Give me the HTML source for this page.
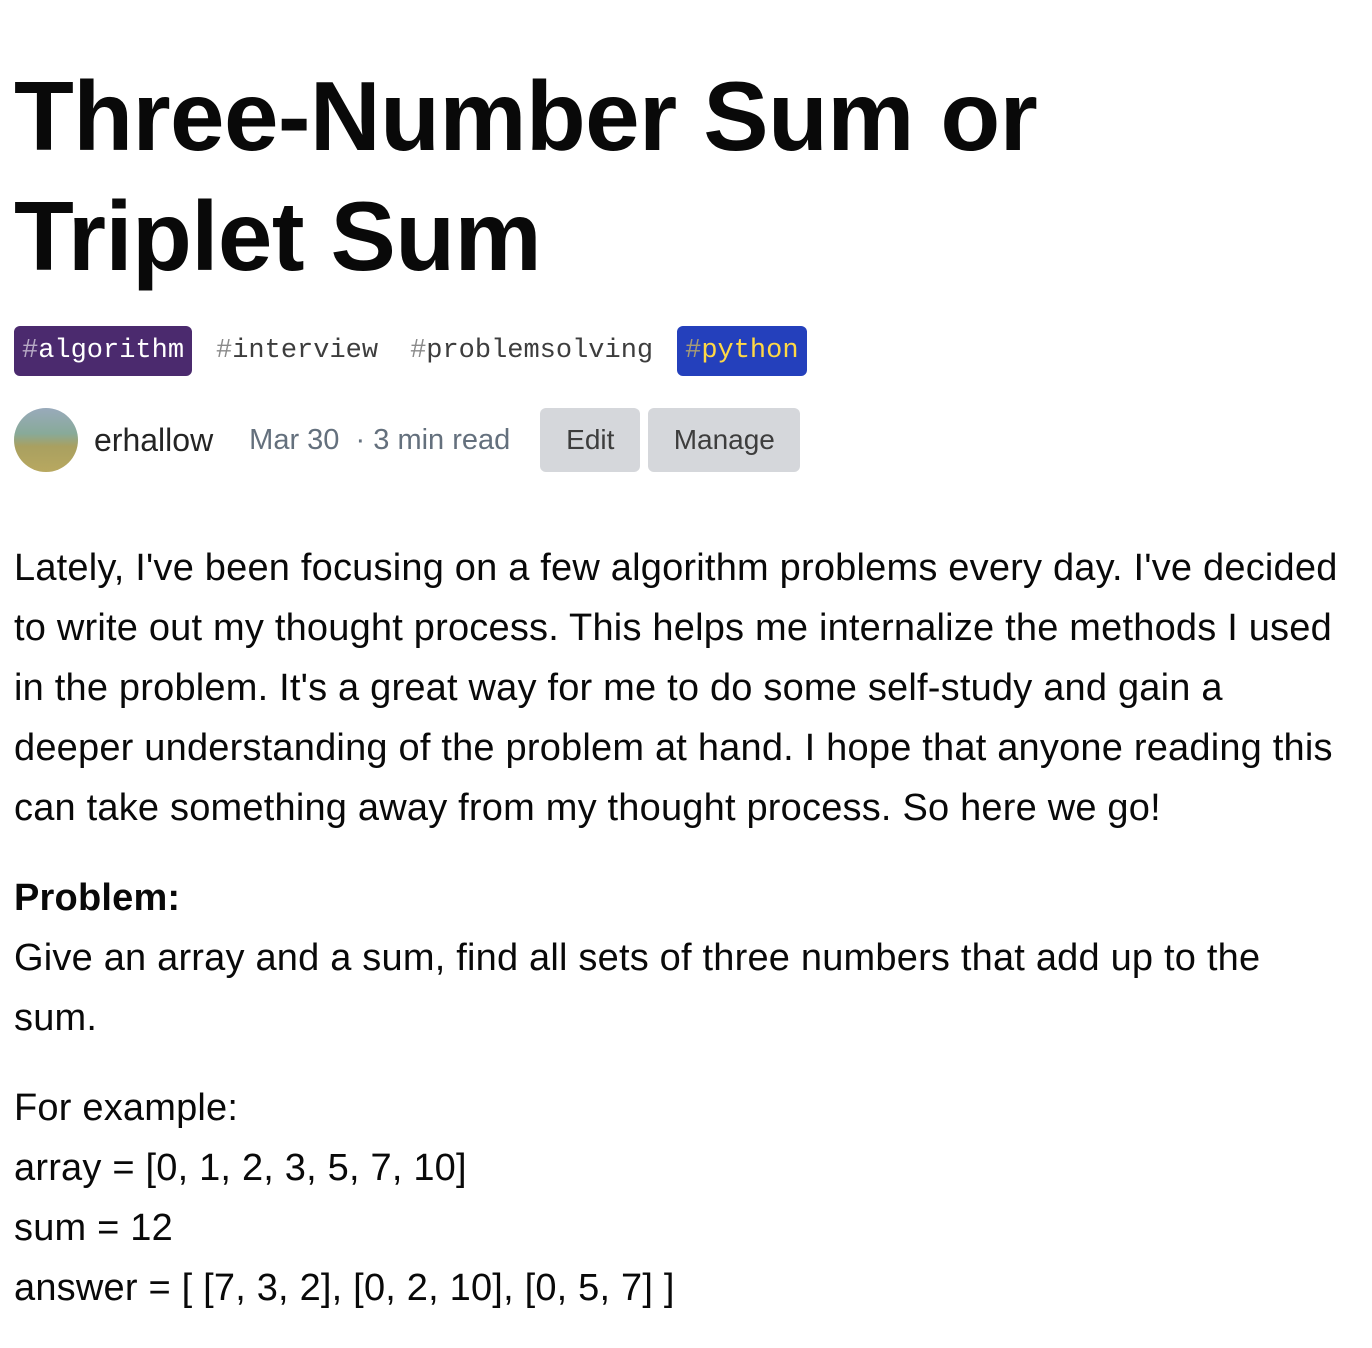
<!DOCTYPE html>
<html><head><meta charset="utf-8"><style>
body{margin:0;background:#fff;font-family:"Liberation Sans",sans-serif;color:#090909;}
.wrap{padding:0 0 0 14px;width:1358px;}
h1{font-size:98px;line-height:120px;font-weight:bold;margin:0;padding-top:56px;letter-spacing:-0.6px;}
.tags{margin-top:30px;height:50px;display:flex;align-items:center;font-family:"Liberation Mono",monospace;font-size:27px;}
.tag{height:50px;line-height:50px;padding:0 8px;border-radius:6px;margin-right:8px;color:#3d3d3d;}
.tag .h{opacity:.6}
.meta{display:flex;align-items:center;margin-top:32px;height:64px;}
.av{width:64px;height:64px;border-radius:50%;background:linear-gradient(#9ab 0%,#8a9 40%,#a9a060 60%,#b8a860 100%);}
.name{font-size:32px;color:#242424;margin-left:16px;}
.date{font-size:29px;color:#64707d;margin-left:36px;}
.btn{background:#d5d7db;border-radius:6px;height:64px;line-height:64px;font-size:28px;color:#3d3d3d;text-align:center;}
.body{font-size:38px;line-height:60px;margin-top:66px;letter-spacing:0.2px;white-space:nowrap;}
p{margin:0 0 30px;}
</style></head><body><div class="wrap">
<h1>Three-Number Sum or<br>Triplet Sum</h1>
<div class="tags">
<span class="tag" style="background:#4b2a6e;color:#fff"><span class="h">#</span>algorithm</span>
<span class="tag" style="margin-left:8px"><span class="h">#</span>interview</span>
<span class="tag" style="margin-left:8px"><span class="h">#</span>problemsolving</span>
<span class="tag" style="background:#2440bc;color:#ffd845;margin-left:8px"><span class="h">#</span>python</span>
</div>
<div class="meta">
<div class="av"></div>
<span class="name">erhallow</span>
<span class="date">Mar 30 &nbsp;· 3 min read</span>
<div class="btn" style="width:100px;margin-left:30px">Edit</div>
<div class="btn" style="width:152px;margin-left:8px">Manage</div>
</div>
<div class="body">
<p>Lately, I've been focusing on a few algorithm problems every day. I've decided<br>to write out my thought process. This helps me internalize the methods I used<br>in the problem. It's a great way for me to do some self-study and gain a<br>deeper understanding of the problem at hand. I hope that anyone reading this<br>can take something away from my thought process. So here we go!</p>
<p><b>Problem:</b><br>Give an array and a sum, find all sets of three numbers that add up to the<br>sum.</p>
<p>For example:<br>array = [0, 1, 2, 3, 5, 7, 10]<br>sum = 12<br>answer = [ [7, 3, 2], [0, 2, 10], [0, 5, 7] ]</p>
</div>
</div></body></html>
